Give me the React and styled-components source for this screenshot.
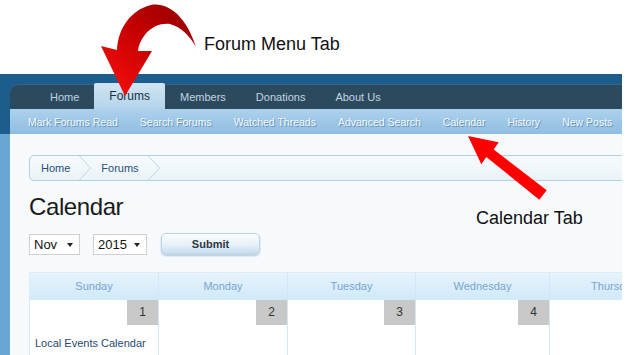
import React from 'react'
import styled, { createGlobalStyle } from 'styled-components'

const GlobalStyle = createGlobalStyle`
  html, body {
    margin: 0;
    padding: 0;
    background: #ffffff;
  }
  body {
    font-family: 'Liberation Sans', Arial, sans-serif;
  }
`

const tabs = ['Home', 'Forums', 'Members', 'Donations', 'About Us']
const subLinks = ['Mark Forums Read', 'Search Forums', 'Watched Threads', 'Advanced Search', 'Calendar', 'History', 'New Posts']
const days = ['Sunday', 'Monday', 'Tuesday', 'Wednesday', 'Thursday']

export default function App() {
  return (
    <StyledPage>
      <GlobalStyle />
      <StyledTopSpace />
      <StyledSite>
        <StyledTabBar>
          {tabs.map((t) => (
            <StyledTab key={t} active={t === 'Forums'}>{t}</StyledTab>
          ))}
        </StyledTabBar>
        <StyledSubNav>
          {subLinks.map((s) => (
            <StyledSubLink key={s}>{s}</StyledSubLink>
          ))}
        </StyledSubNav>
        <StyledContent>
          <StyledBreadcrumb>
            <StyledCrumb>Home</StyledCrumb>
            <Chevron />
            <StyledCrumb>Forums</StyledCrumb>
            <Chevron />
          </StyledBreadcrumb>
          <StyledTitle>Calendar</StyledTitle>
          <StyledControls>
            <StyledSelect width={51}>Nov<StyledCaret /></StyledSelect>
            <StyledSelect width={54}>2015<StyledCaret /></StyledSelect>
            <StyledButton>Submit</StyledButton>
          </StyledControls>
          <StyledCalendar>
            {days.map((d) => (
              <StyledDayHead key={d}>{d}</StyledDayHead>
            ))}
            {days.map((d, i) => (
              <StyledDayCell key={d}>
                {i < 4 && <StyledDayNum>{i + 1}</StyledDayNum>}
                {i === 0 && <StyledEvent>Local Events Calendar</StyledEvent>}
              </StyledDayCell>
            ))}
          </StyledCalendar>
        </StyledContent>
      </StyledSite>

      <StyledArrow width="628" height="355" viewBox="0 0 628 355">
        <defs>
          <linearGradient id="curveRed" x1="1" y1="0" x2="0" y2="1">
            <stop offset="0" stopColor="#8e0000" />
            <stop offset="0.45" stopColor="#c40000" />
            <stop offset="1" stopColor="#ff1010" />
          </linearGradient>
        </defs>
        <path
          d="M196,47 C186,16 168,2 151,5 C131,10 118,28 117,50 L101,46 L125,96 L152,51 L138,51 C140,36 153,22 170,24 C181,27 190,36 196,47 Z"
          fill="url(#curveRed)"
        />
        <polygon
          points="468,136 481.3,164.3 486.3,157 539.3,199.7 546.7,190.3 493.7,149.6 498.7,142.3"
          fill="#ff0000"
        />
      </StyledArrow>
      <StyledLabel left={204} top={33}>Forum Menu Tab</StyledLabel>
      <StyledLabel left={476} top={207}>Calendar Tab</StyledLabel>
    </StyledPage>
  )
}

function Chevron() {
  return (
    <StyledChevron width="14" height="26" viewBox="0 0 14 26">
      <polyline points="1,0 13,13 1,26" fill="none" stroke="#b5d4e6" strokeWidth="1" />
    </StyledChevron>
  )
}

const StyledPage = styled.div`
  position: relative;
  width: 628px;
  height: 355px;
  overflow: hidden;
  background: #ffffff;
`

const StyledTopSpace = styled.div`
  height: 74px;
`

const StyledSite = styled.div`
  width: 612px;
  height: 281px;
  padding-left: 10px;
  padding-top: 10px;
  background: linear-gradient(#1d5d8d 0, #1d5d8d 60px, #6aa6d3 60px);
  display: flex;
  flex-direction: column;
`

const StyledTabBar = styled.div`
  height: 25px;
  display: flex;
  align-items: flex-end;
  padding-left: 25px;
  background: #2c4a5e;
  border-top-left-radius: 9px;
  border-top: 1px solid #3b6583;
  box-sizing: border-box;
`

const StyledTab = styled.div`
  padding: 0 15px;
  height: ${(p) => (p.active ? '26px' : '24px')};
  line-height: ${(p) => (p.active ? '27px' : '24px')};
  margin-top: ${(p) => (p.active ? '-2px' : '0')};
  font-size: ${(p) => (p.active ? '12px' : '11px')};
  color: ${(p) => (p.active ? '#1a2f42' : '#c2d4e0')};
  background: ${(p) => (p.active ? 'linear-gradient(#d0e5f3, #b3d3ea)' : 'transparent')};
  border-top-left-radius: ${(p) => (p.active ? '2px' : '0')};
  border-top-right-radius: ${(p) => (p.active ? '2px' : '0')};
`

const StyledSubNav = styled.div`
  height: 25px;
  display: flex;
  align-items: center;
  padding-left: 7px;
  background: linear-gradient(#add1ec, #8ebde2);
  overflow: hidden;
`

const StyledSubLink = styled.div`
  padding: 0 11px;
  font-size: 10.5px;
  color: #f4f9fd;
  text-shadow: 1px 1px 0 rgba(55, 95, 135, 0.55);
  white-space: nowrap;
`

const StyledContent = styled.div`
  flex: 1;
  background: #f7fafd;
  padding: 21px 0 0 19px;
  overflow: hidden;
`

const StyledBreadcrumb = styled.div`
  height: 26px;
  box-sizing: border-box;
  width: calc(100% + 12px);
  display: flex;
  align-items: center;
  padding-left: 10px;
  border: 1px solid #b0d0e2;
  border-radius: 5px;
  background: linear-gradient(#f6fafc, #ebf3f8);
`

const StyledCrumb = styled.span`
  font-size: 11px;
  color: #22527c;
  padding: 0 8px 0 1px;
`

const StyledChevron = styled.svg`
  display: block;
  height: 24px;
  width: 14px;
  margin-right: 8px;
`

const StyledTitle = styled.h1`
  margin: 11px 0 0;
  font-size: 24px;
  line-height: 30px;
  font-weight: normal;
  letter-spacing: -0.4px;
  color: #1a1a1a;
`

const StyledControls = styled.div`
  margin-top: 11px;
  height: 22px;
  display: flex;
  align-items: center;
  gap: 13px;
`

const StyledSelect = styled.div`
  position: relative;
  width: ${(p) => p.width}px;
  height: 21px;
  box-sizing: border-box;
  border: 1px solid #cfcfcf;
  background: #ffffff;
  font-size: 13px;
  line-height: 19px;
  padding-left: 4px;
  color: #111111;
`

const StyledCaret = styled.span`
  position: absolute;
  right: 6px;
  top: 8px;
  width: 0;
  height: 0;
  border-left: 3.5px solid transparent;
  border-right: 3.5px solid transparent;
  border-top: 4px solid #222222;
`

const StyledButton = styled.div`
  margin-left: 1px;
  width: 99px;
  height: 22px;
  box-sizing: border-box;
  border: 1px solid #bcd3e4;
  border-radius: 5px;
  background: linear-gradient(#fbfdfe, #e6f0f8 55%, #c3dbee);
  box-shadow: 0 1px 2px rgba(60, 100, 140, 0.35);
  font-size: 11px;
  font-weight: bold;
  line-height: 20px;
  text-align: center;
  color: #2c3844;
`

const StyledCalendar = styled.div`
  margin-top: 17px;
  display: grid;
  grid-template-columns: 129px 129px 128px 134px 129px;
  grid-template-rows: 27px 1fr;
  width: 650px;
  height: 100px;
  border-top: 1px solid #d9ebf7;
  border-left: 1px solid #dcecf7;
  background: #ffffff;
`

const StyledDayHead = styled.div`
  background: linear-gradient(#e5f3fc, #d1e9f9);
  border-right: 1px solid #d3e6f3;
  font-size: 11px;
  line-height: 27px;
  text-align: center;
  color: #77a5cf;
`

const StyledDayCell = styled.div`
  display: flex;
  flex-direction: column;
  border-right: 1px solid #d6e7f2;
`

const StyledDayNum = styled.div`
  align-self: flex-end;
  width: 31px;
  height: 25px;
  background: #c8c8c8;
  font-size: 12px;
  line-height: 25px;
  text-align: center;
  color: #333333;
`

const StyledEvent = styled.div`
  margin-top: 11px;
  padding-left: 5px;
  font-size: 11px;
  line-height: 14px;
  color: #1f4a72;
`

const StyledArrow = styled.svg`
  position: absolute;
  left: 0;
  top: 0;
  pointer-events: none;
`

const StyledLabel = styled.div`
  position: absolute;
  left: ${(p) => p.left}px;
  top: ${(p) => p.top}px;
  font-size: 18px;
  line-height: 22px;
  color: #111111;
  white-space: nowrap;
`
